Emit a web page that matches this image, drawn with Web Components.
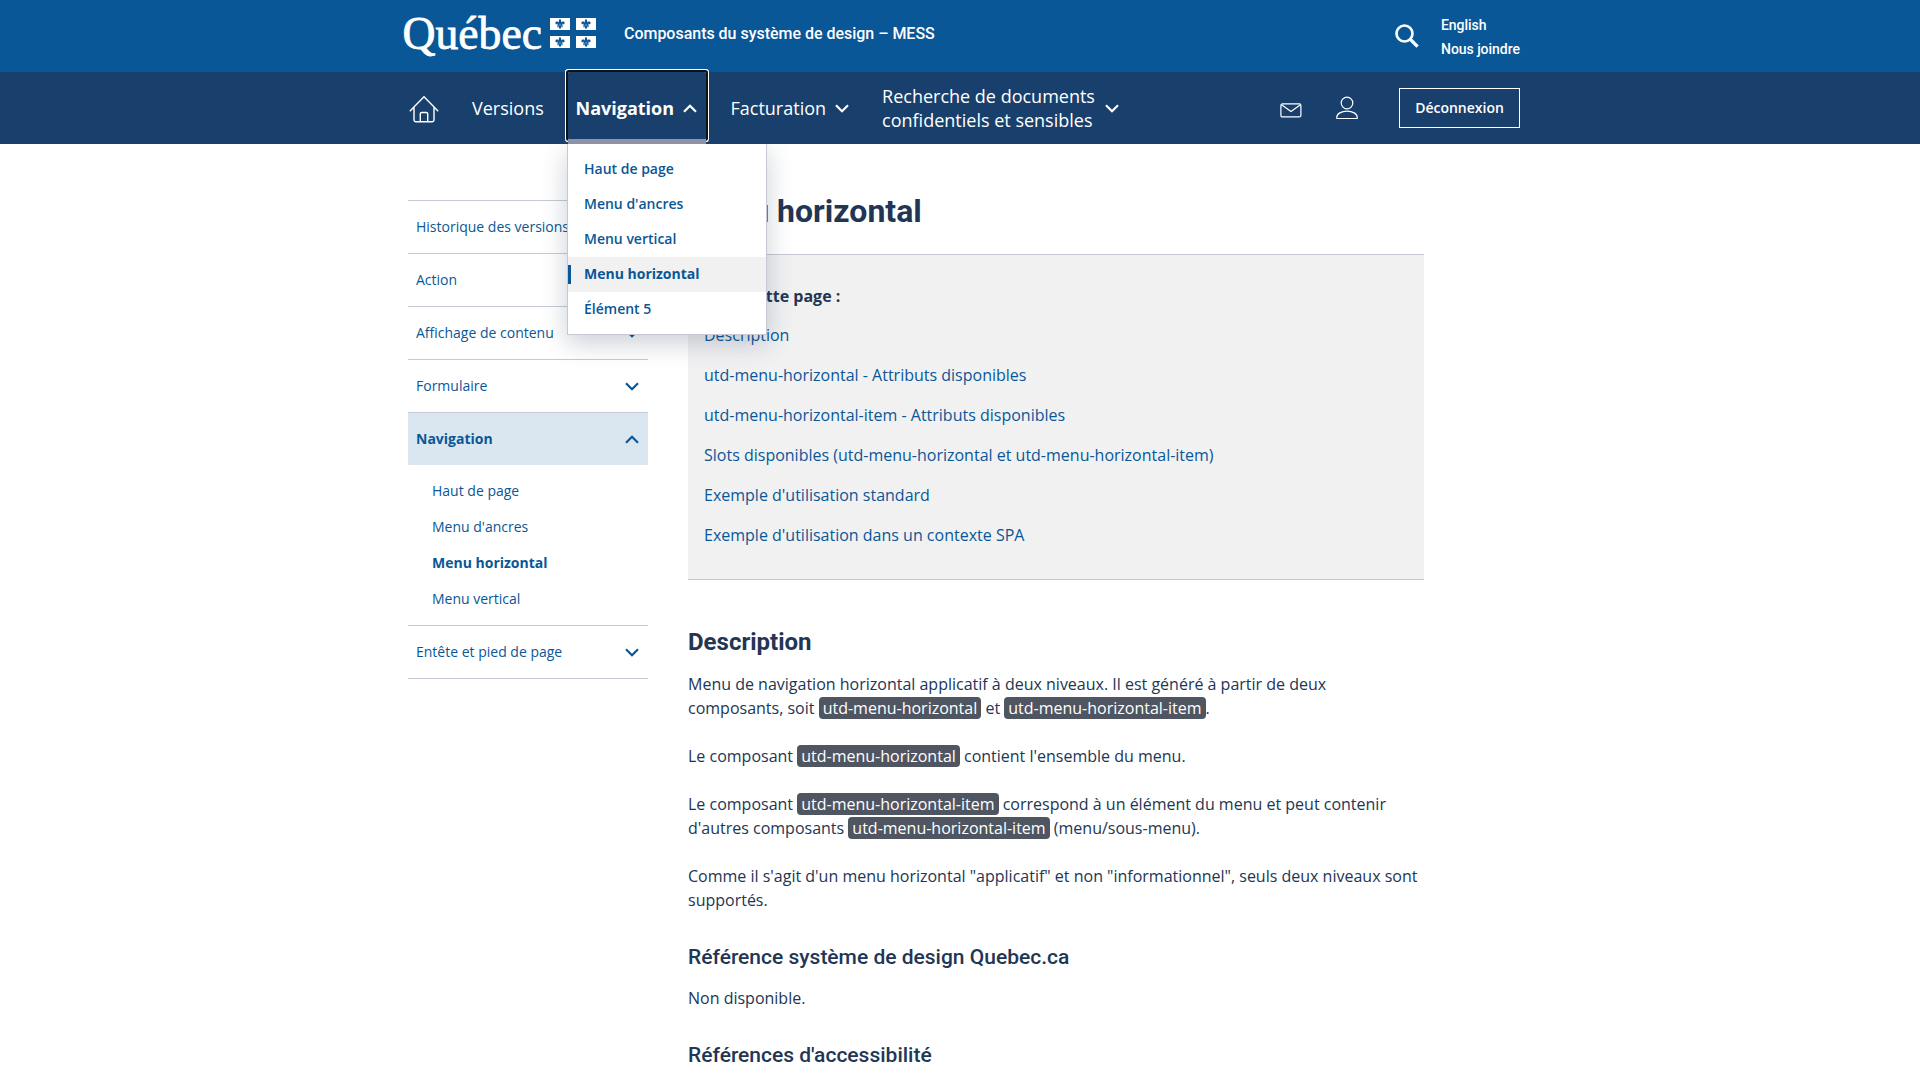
<!DOCTYPE html>
<html lang="fr">
<head>
<meta charset="utf-8">
<title>Menu horizontal</title>
<style>
html,body{margin:0;padding:0}
body{width:1920px;height:1080px;overflow:hidden;background:#fff;color:#223654;font-family:"Open Sans",sans-serif;font-size:16px;line-height:24px}
</style>
</head>
<body>
<demo-page></demo-page>
<script>
const define = (name, css, html) => customElements.define(name, class extends HTMLElement {
  constructor() {
    super();
    const t = document.createElement('template');
    t.innerHTML = `<style>*{box-sizing:border-box}${css}</style>${typeof html === 'function' ? html(this) : html}`;
    this.attachShadow({mode: 'open'}).appendChild(t.content.cloneNode(true));
  }
});

define('utd-chevron', `:host{display:block;width:14px;height:9px;flex:none}:host([up]) svg{transform:scaleY(-1)}svg{display:block}`,
  `<svg width="14" height="9" viewBox="0 0 14 9"><path d="M1 1.2 7 7.2 13 1.2" fill="none" stroke="currentColor" stroke-width="2.2"/></svg>`);

define('utd-flag', `:host{display:block;width:20px;height:12px}svg{display:block}`,
  `<svg width="20" height="12" viewBox="0 0 20 12"><path d="M0 0h20v12H0z" fill="#fff"/><g fill="#095797"><path d="M10 .8C8.5 2.600 8.500 4 9.300 6.500h1.400C11.500 4 11.500 2.600 10 .8z"/><path d="M9.300 7V5.300C8.700 3.200 5.600 3 5.400 5c0 1.400 1.300 1.600 1.700.7.600 0 .8.500.7 1.500zM10.700 7V5.300c.6-2.100 3.700-2.300 3.900-.3 0 1.400-1.300 1.600-1.700.7-.6 0-.8.500-.7 1.500z"/><path d="M7.300 6.600h5.400v1.100H7.300z"/><path d="M9.300 7.500h1.400l.5 2L10 11.300 8.800 9.500zM7.800 7.700h1.200C8.800 9 8 9.500 7.200 9.300zM12.200 7.700H11c.2 1.300 1 1.800 1.800 1.600z"/></g></svg>`);

define('utd-logo', `:host{display:flex;width:194px;height:72px;gap:9px}
.word{display:block;overflow:visible}
.flags{display:grid;grid-template-columns:20px 20px;grid-template-rows:12px 12px;gap:6px;padding-top:18px}`,
  `<svg class="word" width="138" height="72"><text x="-.5" y="48.700" textLength="139.500" lengthAdjust="spacingAndGlyphs" font-family="Liberation Serif" font-size="45.500" fill="#fff" stroke="#fff" stroke-width=".8">Québec</text></svg>
  <div class="flags"><utd-flag></utd-flag><utd-flag></utd-flag><utd-flag></utd-flag><utd-flag></utd-flag></div>`);

define('utd-header', `:host{display:block;height:72px;background:#095797;color:#fff;font-family:Roboto,sans-serif;font-weight:500}
.in{width:1117px;margin-left:403px;height:72px;display:flex}
.t{margin-left:27px;padding-top:22px;font-size:16px;line-height:24px;letter-spacing:-.02px}
.s{margin-left:auto;padding-top:24px}
.s svg{display:block}
.l{margin-left:22px;width:79px;padding-top:13px;font-size:14px;line-height:24px;white-space:nowrap;letter-spacing:-.04px}`,
  `<div class="in"><utd-logo></utd-logo><div class="t"><slot></slot></div>
  <div class="s"><svg width="24" height="24" fill="none" stroke="#fff"><circle cx="9.500" cy="9.500" r="8" stroke-width="2.700"/><path d="M15 15l7.600 7.600" stroke-width="3.300"/></svg></div>
  <div class="l"><div>English</div><div>Nous joindre</div></div></div>`);

define('utd-sub', `:host{display:block;height:35px;padding:0 16px;font-size:14px;line-height:33px;font-weight:600;color:#095797;white-space:nowrap}
:host([active]){background:linear-gradient(#095797,#095797) 0 8px/3px 19px no-repeat #f1f1f2;font-weight:700}`, `<slot></slot>`);

define('utd-item', `:host{display:flex;flex:none;align-items:center;height:72px;position:relative;font-size:18px;line-height:24px;white-space:nowrap}
.label{display:block}utd-chevron{margin-left:var(--chevron-gap,9px)}
:host([open]){font-weight:700;width:138px;padding-left:7.500px}
.ring,.bar,.drop{display:none}
:host([open]) .ring{display:block;position:absolute;left:0;top:0;width:138px;height:67px;border-radius:1px;box-shadow:0 0 0 2px #101214,0 0 0 3px #fff}
:host([open]) .bar{display:block;position:absolute;left:0;top:67px;width:138px;height:5px;background:#8c93a5}
:host([open]) .drop{display:block;position:absolute;left:-1px;top:72px;width:200px;height:191px;background:#fff;border:1px solid #c5cad2;border-top:0;padding-top:8px;box-shadow:0 8px 24px rgba(34,54,84,.24);clip-path:inset(0 -50px -50px -50px);z-index:5}`,
  el => `<span class="label"><slot></slot></span>${el.hasAttribute('plain') ? '' : `<utd-chevron ${el.hasAttribute('open') ? 'up' : ''}></utd-chevron>`}
  <div class="ring"></div><div class="bar"></div><div class="drop"><slot name="sub"></slot></div>`);

define('utd-nav', `:host{display:block;height:72px;background:#19406c;color:#fff;position:relative;z-index:2}
.in{width:1111px;margin-left:409px;height:72px;display:flex;align-items:center}
svg{display:block;flex:none}
.items{display:flex;margin-left:33px}
.right{display:flex;align-items:center;margin-left:auto}
.btn{margin-left:41.500px;width:121px;height:40px;border:1px solid #fff;font-size:14px;font-weight:600;line-height:38px;text-align:center}`,
  `<div class="in">
  <svg width="30" height="28" style="margin-top:2px" fill="none" stroke="#fff" stroke-width="1.400"><path d="M.8 16.300 15 1.800l14.200 14.500M5 12.500V25q0 1.700 1.700 1.700h16.600Q25 26.700 25 25V12.500M11.300 26.500v-7.700q0-1.300 1.300-1.300h4.800q1.300 0 1.300 1.300v7.700"/></svg>
  <div class="items"><slot></slot></div>
  <div class="right">
  <svg width="22" height="15" style="margin-top:4px" fill="none" stroke="#fff" stroke-width="1.200"><rect x=".9" y=".9" width="20" height="13" rx="1.500"/><path d="M1.200 1.500 11 8.600l9.800-7.100"/></svg>
  <svg width="22" height="24" style="margin:0 0 0 34px" fill="none" stroke="#fff" stroke-width="1.200"><circle cx="11" cy="7" r="5.800"/><path d="M.8 22.500v-1.200c0-3.500 4.600-6.200 10.200-6.200s10.200 2.700 10.200 6.200v1.200z" stroke-linejoin="round"/></svg>
  <div class="btn">Déconnexion</div></div></div>`);

define('side-item', `:host{display:block;border-top:1px solid #c5cad2;color:#095797;font-size:14px}
.row{display:flex;align-items:center;justify-content:space-between;height:52px;padding:0 9px 0 8px}
:host([open]) .row{background:#dae6f0;font-weight:700}
.sub{display:none}:host([open]) .sub{display:block;padding:8px 0 8px 24px}`,
  el => `<div class="row"><span>${el.getAttribute('label')}</span>${el.hasAttribute('leaf') ? '' : `<utd-chevron ${el.hasAttribute('open') ? 'up' : ''}></utd-chevron>`}</div><div class="sub"><slot></slot></div>`);
define('side-link', `:host{display:block;height:36px;line-height:36px}:host([active]){font-weight:700}`, `<slot></slot>`);

define('side-menu', `:host{display:block;width:240px;border-bottom:1px solid #c5cad2;flex:none}`,
  `<side-item leaf label="Historique des versions"></side-item>
  <side-item leaf label="Action"></side-item>
  <side-item label="Affichage de contenu"></side-item>
  <side-item label="Formulaire"></side-item>
  <side-item open label="Navigation"><side-link>Haut de page</side-link><side-link>Menu d'ancres</side-link><side-link active>Menu horizontal</side-link><side-link>Menu vertical</side-link></side-item>
  <side-item label="Entête et pied de page"></side-item>`);

define('anchor-menu', `:host{display:block;height:326px;background:#f1f1f2;border-top:1px solid #c5cad2;border-bottom:1px solid #c5cad2;padding:29px 16px 0}
b{display:block;font-weight:700}.links{display:grid;grid-auto-rows:40px;line-height:40px;padding-top:7px;color:#095797}`,
  `<b>Dans cette page :</b><div class="links"><span>Description</span><span>utd-menu-horizontal - Attributs disponibles</span><span>utd-menu-horizontal-item - Attributs disponibles</span><span>Slots disponibles (utd-menu-horizontal et utd-menu-horizontal-item)</span><span>Exemple d'utilisation standard</span><span>Exemple d'utilisation dans un contexte SPA</span></div>`);

define('code-tag', `:host{display:inline;background:#4f5662;color:#fff;border-radius:4px;padding:0 4px}`, `<slot></slot>`);

define('doc-body', `:host{display:block;width:736px}
h1,h2,h3,p{margin:0}
h1,h2,h3{font-family:Roboto,sans-serif}
h1{font-size:32px;line-height:40px;font-weight:700;padding-bottom:23px}
h2{font-size:24px;line-height:28px;font-weight:700;padding:48px 0 16px}
h3{font-size:21px;line-height:24px;font-weight:500;padding:33px 0 17px}
p+p{margin-top:24px}`,
  `<h1>Menu horizontal</h1><anchor-menu></anchor-menu>
  <h2>Description</h2>
  <p>Menu de navigation horizontal applicatif à deux niveaux. Il est généré à partir de deux<br>composants, soit <code-tag>utd-menu-horizontal</code-tag> et <code-tag>utd-menu-horizontal-item</code-tag>.</p>
  <p>Le composant <code-tag>utd-menu-horizontal</code-tag> contient l'ensemble du menu.</p>
  <p>Le composant <code-tag>utd-menu-horizontal-item</code-tag> correspond à un élément du menu et peut contenir<br>d'autres composants <code-tag>utd-menu-horizontal-item</code-tag> (menu/sous-menu).</p>
  <p>Comme il s'agit d'un menu horizontal "applicatif" et non "informationnel", seuls deux niveaux sont<br>supportés.</p>
  <h3>Référence système de design Quebec.ca</h3><p>Non disponible.</p>
  <h3>Références d'accessibilité</h3>`);

define('demo-page', `:host{display:block}
main{display:flex;align-items:flex-start;gap:40px;padding:0 0 0 408px}
side-menu{margin-top:56px}doc-body{margin-top:47px}
.v{width:72px;margin-right:24px}.f{margin-left:24.500px}.r{margin-left:33px;--chevron-gap:10px}`,
  `<utd-header>Composants du système de design – MESS</utd-header>
  <utd-nav><utd-item plain class="v">Versions</utd-item>
  <utd-item open>Navigation<utd-sub slot="sub">Haut de page</utd-sub><utd-sub slot="sub">Menu d'ancres</utd-sub><utd-sub slot="sub">Menu vertical</utd-sub><utd-sub slot="sub" active>Menu horizontal</utd-sub><utd-sub slot="sub">Élément 5</utd-sub></utd-item>
  <utd-item class="f">Facturation</utd-item>
  <utd-item class="r">Recherche de documents<br>confidentiels et sensibles</utd-item></utd-nav>
  <main><side-menu></side-menu><doc-body></doc-body></main>`);
</script>
</body>
</html>
